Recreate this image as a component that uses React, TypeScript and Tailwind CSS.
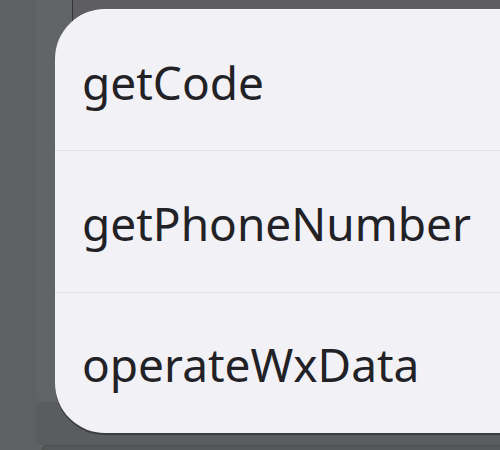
import React from 'react';

const items = ['getCode', 'getPhoneNumber', 'operateWxData'];

const App: React.FC = () => {
  return (
    <div className="relative h-[450px] w-[500px] overflow-hidden bg-[#5e6262]">
      {/* dimmed page behind the sheet */}
      <div className="flex h-full">
        <div className="w-[36px] shrink-0 bg-[#5d6161]" />
        <div className="flex flex-1 flex-col">
          <div className="flex h-[402px]">
            <div className="w-[37px] shrink-0 rounded-bl-[12px] border-r border-[#2f3434] bg-[#626565]" />
            <div className="flex-1 bg-[#5e5d62]" />
          </div>
          <div className="h-[43px] bg-[#5a5d5d]" />
          <div className="ml-[6px] flex-1 rounded-tl-[8px] border-t border-l border-[#4b4e4e] bg-[#555858]" />
        </div>
      </div>

      {/* action sheet */}
      <div
        className="absolute left-[55px] top-[9px] flex h-[424px] w-[480px] flex-col rounded-l-[50px] border-t border-white/70 bg-[#f2f1f6] shadow-[0_2px_0_rgba(40,42,42,0.6)]"
        style={{ fontFamily: '"Noto Sans", "Open Sans", sans-serif' }}
      >
        {items.map((label, i) => (
          <div
            key={label}
            className={`flex flex-1 items-center pl-[27px] text-[46px] leading-none text-[#222226] ${
              i < items.length - 1 ? 'border-b border-[#e1e0e5]' : ''
            }`}
          >
            <span className="mt-[3px]">{label}</span>
          </div>
        ))}
      </div>
    </div>
  );
};

export default App;
